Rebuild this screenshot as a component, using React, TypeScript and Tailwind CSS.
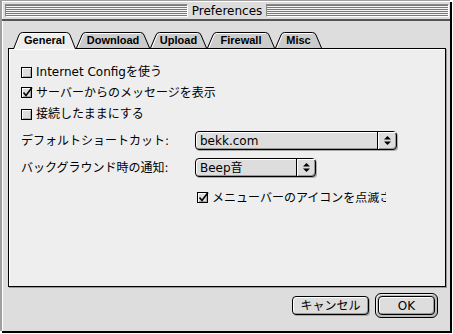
import React from "react";

const FONT = "[font-family:'DejaVu_Sans','Noto_Sans_CJK_JP',sans-serif]";

function TabShape({ w, selected }: { w: number; selected: boolean }) {
  const h = selected ? 17 : 16;
  const d = `M0.5,${h} L6,3 Q7,0.5 9.5,0.5 L${w - 9.5},0.5 Q${w - 7},0.5 ${w - 6},3 L${w - 0.5},${h}`;
  return (
    <svg
      className="absolute left-0 top-0 overflow-visible"
      width={w}
      height={h}
      viewBox={`0 0 ${w} ${h}`}
    >
      <path d={d + (selected ? "" : " Z")} fill={selected ? "#eeeeee" : "#cccccc"} stroke="none" />
      <path d={`M1.8,${h} L7,3.5 Q8,1.5 9.5,1.5 L${w - 9.5},1.5`} fill="none" stroke="#ffffff" strokeWidth="1" />
      <path d={d} fill="none" stroke="#000" strokeWidth="1" />
    </svg>
  );
}

function Tab({ label, w, cls, selected = false }: { label: string; w: number; cls: string; selected?: boolean }) {
  return (
    <div className={`relative h-[16px] ${cls} flex items-center justify-center`}>
      <TabShape w={w} selected={selected} />
      <span className="relative text-[11px] font-bold leading-none pt-[1px] [font-family:'Liberation_Sans',sans-serif] text-black">
        {label}
      </span>
    </div>
  );
}

function Checkbox({ checked }: { checked: boolean }) {
  return (
    <span className="relative inline-block w-[11px] h-[11px] border border-black bg-[#dddddd] shadow-[inset_1px_1px_0_#ffffff,inset_-1px_-1px_0_#aaaaaa] shrink-0">
      {checked && (
        <svg className="absolute left-[0px] top-[-2px] overflow-visible" width="12" height="12" viewBox="0 0 12 12">
          <path d="M1.5,6.5 L4,9.5 L10,1.5" fill="none" stroke="#000" strokeWidth="1.6" />
        </svg>
      )}
    </span>
  );
}

function CheckRow({ checked, label, cls }: { checked: boolean; label: string; cls: string }) {
  return (
    <div className={`flex items-center gap-[4px] ${cls}`}>
      <Checkbox checked={checked} />
      <span className="text-[12px] leading-none text-black whitespace-nowrap">{label}</span>
    </div>
  );
}

function Arrows() {
  return (
    <svg width="7" height="11" viewBox="0 0 7 11">
      <path d="M3.5,1 L7,4.5 L0,4.5 Z" fill="#000" />
      <path d="M0,6.5 L7,6.5 L3.5,10 Z" fill="#000" />
    </svg>
  );
}

function Popup({ value, cls }: { value: string; cls: string }) {
  return (
    <div
      className={`flex h-[19px] ${cls} rounded-[4px] border border-black bg-[#dddddd] shadow-[inset_1px_1px_0_#ffffff,inset_-1px_-1px_0_#999999,1px_1px_0_#aaaaaa]`}
    >
      <div className="flex-1 flex items-center pl-[4px] text-[12px] leading-none text-black">{value}</div>
      <div className="w-[19px] border-l border-black flex items-center justify-center shadow-[inset_1px_1px_0_#ffffff]">
        <Arrows />
      </div>
    </div>
  );
}

function Stripes({ cls }: { cls: string }) {
  return (
    <div
      className={`${cls} h-[13px] border-t border-l border-[#888888] border-r border-b border-r-white border-b-white bg-[repeating-linear-gradient(to_bottom,#7a7a7a_0px,#7a7a7a_1px,#f4f4f4_1px,#f4f4f4_2px)]`}
    />
  );
}

export default function App() {
  return (
    <div className={`w-[453px] h-[334px] bg-white ${FONT} overflow-hidden`}>
      <div className="w-[450px] h-[331px] bg-[#dddddd] border-l-2 border-t border-[#a0a0a0] shadow-[2px_2px_0_#000] flex flex-col">
        {/* title bar */}
        <div className="h-[20px] flex items-center pl-[3px] pr-[1px] border-b-2 border-[#555555] shadow-[inset_1px_1px_0_#ffffff]">
          <Stripes cls="flex-1" />
          <div className="px-[4px] text-[12px] leading-none text-black [font-family:'DejaVu_Sans',sans-serif] pt-[1px]">
            Preferences
          </div>
          <Stripes cls="flex-1" />
        </div>
        {/* body */}
        <div className="flex-1 flex flex-col shadow-[inset_1px_0_0_#ffffff]">
          <div className="pl-[6px] pr-[2px] pt-[11px]">
            <div className="relative z-10 flex h-[16px] pl-[5px]">
              <Tab label="General" w={63} cls="w-[63px]" selected />
              <Tab label="Download" w={74} cls="w-[74px]" />
              <Tab label="Upload" w={57} cls="w-[57px]" />
              <Tab label="Firewall" w={68} cls="w-[68px]" />
              <Tab label="Misc" w={47} cls="w-[47px]" />
            </div>
            <div className="h-[239px] w-[438px] border border-black bg-[#eeeeee] shadow-[inset_1px_1px_0_#ffffff,1px_1px_0_#999999] pt-[13px] pl-[12px] flex flex-col">
              <CheckRow checked={false} label="Internet Configを使う" cls="h-[20px]" />
              <CheckRow checked={true} label="サーバーからのメッセージを表示" cls="h-[21px]" />
              <CheckRow checked={false} label="接続したままにする" cls="h-[22px]" />
              <div className="flex items-center mt-[6px]">
                <div className="w-[174px] text-[12px] leading-none text-black">デフォルトショートカット:</div>
                <Popup value="bekk.com" cls="w-[202px]" />
              </div>
              <div className="flex items-center mt-[8px]">
                <div className="w-[174px] text-[12px] leading-none text-black">バックグラウンド時の通知:</div>
                <Popup value="Beep音" cls="w-[121px]" />
              </div>
              <div className="flex items-center gap-[4px] mt-[15px] ml-[176px] h-[11px]">
                <Checkbox checked={true} />
                <span className="w-[174px] overflow-hidden whitespace-nowrap text-[12px] leading-none text-black">
                  メニューバーのアイコンを点滅させる
                </span>
              </div>
            </div>
          </div>
          {/* buttons */}
          <div className="flex justify-end items-center mt-[6px] pr-[12px] gap-[6px]">
            <button className="w-[77px] h-[19px] rounded-[4px] border border-black bg-[#dddddd] shadow-[inset_1px_1px_0_#ffffff,inset_-1px_-1px_0_#999999,1px_1px_0_#aaaaaa] text-[12px] leading-none text-black flex items-center justify-center">
              キャンセル
            </button>
            <div className="w-[63px] h-[25px] rounded-[6px] border border-black bg-[#bbbbbb] shadow-[inset_1px_1px_0_#eeeeee] p-[2px]">
              <button className="w-full h-full rounded-[4px] border border-black bg-[#dddddd] shadow-[inset_1px_1px_0_#ffffff,inset_-1px_-1px_0_#999999] text-[12px] leading-none text-black flex items-center justify-center">
                OK
              </button>
            </div>
          </div>
        </div>
      </div>
    </div>
  );
}
